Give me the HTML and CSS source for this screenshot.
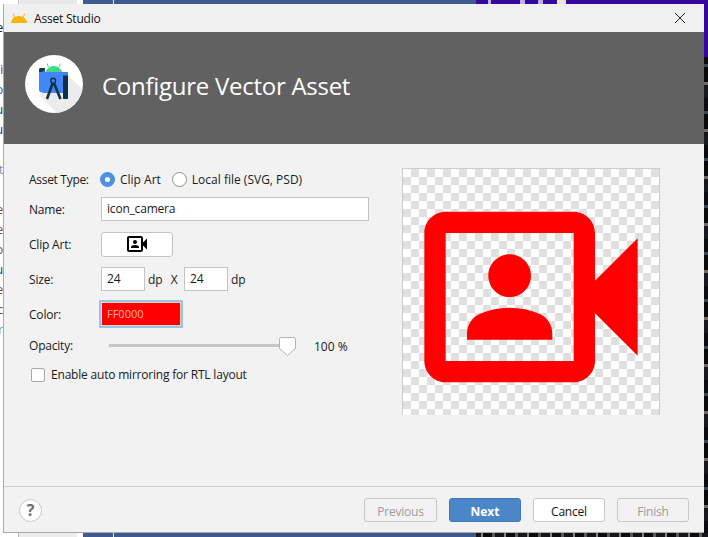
FILE: index.html
```html
<!DOCTYPE html>
<html lang="en">
<head>
<meta charset="utf-8">
<title>Asset Studio</title>
<link rel="stylesheet" href="styles.css">
</head>
<body>
<div class="desktop">
  <div class="bg bg-top"></div>
  <div class="bg bg-left">
    <span class="frag frag-dark">e</span>
    <span class="frag"></span>
    <span class="frag frag-red">i</span>
    <span class="frag frag-blue">o</span>
    <span class="frag frag-navy">u</span>
    <span class="frag frag-navy">u</span>
    <span class="frag"></span>
    <span class="frag frag-slate">t</span>
    <span class="frag"></span>
    <span class="frag frag-brown">e</span>
    <span class="frag frag-brown">e</span>
    <span class="frag frag-brown">o</span>
    <span class="frag frag-navy">u</span>
    <span class="frag frag-brown">e</span>
    <span class="frag frag-brown">c</span>
    <span class="frag frag-slate">r</span>
  </div>
  <div class="bg bg-right"></div>
  <div class="bg bg-bottom"></div>

  <div class="window">
    <div class="titlebar">
      <svg class="droid" width="18" height="12" viewBox="0 0 18 12">
        <path fill="#f5b400" d="M1 11C1.400 7.200 4.600 4 9 4s7.600 3.200 8 7z"/>
        <path stroke="#f5b400" stroke-width="1" d="M4.800 5.500 3.300 1.500M13.200 5.500 14.700 1.500"/>
      </svg>
      <span class="title-text">Asset Studio</span>
      <svg class="close" width="12" height="12" viewBox="0 0 12 12">
        <path stroke="#222" stroke-width="1" fill="none" d="M1 1l10 10M11 1 1 11"/>
      </svg>
    </div>

    <div class="banner">
      <div class="logo">
        <svg width="58" height="58" viewBox="0 0 58 58">
          <defs><clipPath id="logoClip"><circle cx="29" cy="29" r="29"/></clipPath></defs>
          <circle cx="29" cy="29" r="29" fill="#fff"/>
          <path clip-path="url(#logoClip)" fill="#ececec" d="M43 20 58 35V58H32L14 40z"/>
          <path fill="#3ddc84" d="M20 20c.4-5.500 4-9 8.800-9s8.500 3.500 8.900 9z"/>
          <path stroke="#3ddc84" stroke-width="1" d="M23.500 12 22 8.500M34 12l1.500-3.500"/>
          <path fill="#1d3a4c" d="M14 14.500c0-1 .8-1.500 1.800-1.500H20v7h-6z"/>
          <path fill="#4285f4" d="M14 17h2.500c1.500 0 2.500-1 2.500-2.500h.5V17H43v21H20c-3 0-6-1-6-3z"/>
          <path fill="#0f3246" d="M38 20.500h5V43c0 .6-.4 1-1 1h-4z"/>
          <path fill="none" stroke="#0f3246" stroke-width="2.600" d="M28 27 22 44M28.500 27 35.500 44"/>
          <circle cx="28.200" cy="25.700" r="2.400" fill="#4285f4" stroke="#0f3246" stroke-width="1.400"/>
        </svg>
      </div>
      <h1 class="banner-title">Configure Vector Asset</h1>
    </div>

    <div class="content">
      <div class="form">
        <div class="row row-type">
          <span class="label label-type">Asset Type:</span>
          <span class="radio radio-on"></span>
          <span class="radio-text">Clip Art</span>
          <span class="radio radio-off"></span>
          <span class="radio-text">Local file (SVG, PSD)</span>
        </div>
        <div class="row row-name">
          <span class="label">Name:</span>
          <div class="input input-name">icon_camera</div>
        </div>
        <div class="row row-clip">
          <span class="label">Clip Art:</span>
          <div class="clip-button">
            <svg width="24" height="24" viewBox="0 0 24 24"><path fill="#000" d="M18 10.480V6c0-1.100-.9-2-2-2H4c-1.100 0-2 .9-2 2v12c0 1.100.9 2 2 2h12c1.100 0 2-.9 2-2v-4.480l4 3.980v-11l-4 3.980zM16 18H4V6h12v12zm-6-6c1.100 0 2-.9 2-2s-.9-2-2-2-2 .9-2 2 .9 2 2 2zm4 3.430c0-.81-.48-1.530-1.220-1.850-.85-.37-1.790-.58-2.780-.58-.99 0-1.930.21-2.780.58C6.480 13.900 6 14.620 6 15.430V16h8v-.57z"/></svg>
          </div>
        </div>
        <div class="row row-size">
          <span class="label">Size:</span>
          <div class="input input-size">24</div>
          <span class="unit">dp</span>
          <span class="times">X</span>
          <div class="input input-size">24</div>
          <span class="unit">dp</span>
        </div>
        <div class="row row-color">
          <span class="label">Color:</span>
          <div class="color-field">FF0000</div>
        </div>
        <div class="row row-opacity">
          <span class="label">Opacity:</span>
          <div class="slider">
            <svg class="thumb" width="17" height="19" viewBox="0 0 17 19">
              <path fill="#fff" stroke="#b5b5b5" d="M2 .5h13a1.500 1.500 0 0 1 1.500 1.500v9.500l-8 7-8-7V2A1.500 1.500 0 0 1 2 .5z"/>
            </svg>
          </div>
          <span class="percent">100 %</span>
        </div>
        <div class="row row-check">
          <span class="checkbox"></span>
          <span class="check-text">Enable auto mirroring for RTL layout</span>
        </div>
      </div>
      <div class="preview">
        <svg class="preview-icon" width="256" height="256" viewBox="0 0 24 24"><path fill="#f00" d="M18 10.480V6c0-1.100-.9-2-2-2H4c-1.100 0-2 .9-2 2v12c0 1.100.9 2 2 2h12c1.100 0 2-.9 2-2v-4.480l4 3.980v-11l-4 3.980zM16 18H4V6h12v12zm-6-6c1.100 0 2-.9 2-2s-.9-2-2-2-2 .9-2 2 .9 2 2 2zm4 3.430c0-.81-.48-1.530-1.220-1.850-.85-.37-1.790-.58-2.780-.58-.99 0-1.930.21-2.780.58C6.480 13.900 6 14.620 6 15.430V16h8v-.57z"/></svg>
      </div>
    </div>

    <div class="footer">
      <div class="help">?</div>
      <div class="buttons">
        <div class="btn btn-disabled">Previous</div>
        <div class="btn btn-primary">Next</div>
        <div class="btn btn-default">Cancel</div>
        <div class="btn btn-disabled">Finish</div>
      </div>
    </div>
  </div>
</div>
</body>
</html>
```

FILE: styles.css
```css
* { box-sizing: border-box; }
html, body { margin: 0; padding: 0; }
body {
  width: 708px;
  height: 537px;
  overflow: hidden;
  font-family: "Open Sans", "Noto Sans", "Liberation Sans", sans-serif;
  font-size: 12px;
  letter-spacing: -0.2px;
  color: #1a1a1a;
}
.desktop { position: relative; width: 708px; height: 537px; background: #fff; overflow: hidden; }
.bg { position: absolute; }
.bg-top {
  left: 0; top: 0; width: 708px; height: 4px;
  background: linear-gradient(90deg,
    #fff 0 18px, #c9c9c9 18px 19px, #e9e9e9 19px 77px, #fff 77px 83px,
    #3f5a8e 83px 113px, #e8e8f0 113px 114px, #3f5a8e 114px 476px,
    #35079a 476px 488px, #b9b0e0 488px 491px, #35079a 491px 520px, #b9b0e0 520px 525px,
    #35079a 525px 538px, #b9b0e0 538px 543px, #35079a 543px 557px, #e6e6e6 557px 566px, #35079a 566px);
}
.bg-left { left: 0; top: 4px; width: 3px; height: 529px; background: #fff; padding-top: 16px; overflow: hidden; }
.frag {
  display: flex; justify-content: flex-end; width: 3px; height: 20px;
  font-size: 12px; line-height: 20px; white-space: nowrap; color: #222;
}
.frag-dark { margin-top: -2px; margin-bottom: 2px; }
.frag-red { color: #a02048; }
.frag-blue { color: #2a5a98; }
.frag-navy { color: #1a2a60; }
.frag-slate { color: #7a8ca8; }
.frag-brown { color: #8a4a20; }
.bg-right {
  left: 704px; top: 4px; width: 4px; height: 529px;
  background:
    linear-gradient(#35079a 0 53px, transparent 53px),
    repeating-linear-gradient(#0c0c10 0 13px, #3e4450 13px 16px, #0a0a0a 16px 31px, #6f6a66 31px 34px, #17181c 34px 47px);
}
.bg-bottom {
  left: 0; top: 533px; width: 708px; height: 4px;
  background:
    linear-gradient(90deg, #fff 0 18px, #b8b8b8 18px 19px, #ececec 19px 77px, #fff 77px 83px,
      #3f5a8e 83px 113px, #e8e8f0 113px 114px, #3f5a8e 114px 476px, transparent 476px),
    repeating-linear-gradient(90deg, #0c0c10 0 9px, #5c5a58 9px 12px, #15161a 12px 21px, #8a8682 21px 23px);
}

.window {
  position: absolute;
  left: 3px;
  top: 4px;
  width: 701px;
  height: 529px;
  background: #f2f2f2;
  border-left: 1px solid #a9a9a9;
  border-bottom: 1px solid #a9a9a9;
  display: flex;
  flex-direction: column;
}
.titlebar { height: 28px; display: flex; align-items: center; padding: 0 18px 0 6px; background: #f0f0f0; }
.droid { margin-right: 6px; }
.title-text { flex: 1; color: #111; }
.banner { height: 112px; background: #616161; display: flex; align-items: center; padding: 0 0 8px 21px; }
.logo { width: 58px; height: 58px; }
.logo svg { display: block; }
.banner-title { margin: 2px 0 0 19px; font-size: 24px; font-weight: 400; letter-spacing: -0.27px; color: #fff; }

.content { flex: 1; display: flex; border-bottom: 1px solid #cfcfcf; }
.form { width: 398px; padding: 24px 0 0 25px; }
.row { display: flex; align-items: center; }
.label { width: 72px; }
.label-type { width: 71px; letter-spacing: -0.3px; }
.row-type { height: 22px; }
.row-name { height: 24px; margin-top: 7px; }
.row-clip { height: 25px; margin-top: 11px; }
.row-size { height: 24px; margin-top: 10px; }
.row-color { height: 24px; margin-top: 11px; }
.row-opacity { height: 21px; margin-top: 9px; }
.row-check { height: 15px; margin-top: 11px; padding-left: 2px; }

.radio { width: 15px; height: 15px; border-radius: 50%; flex: none; }
.radio-on { background: #fff; border: 5px solid #4c92e0; }
.radio-off { background: #fff; border: 1px solid #8c8c8c; margin-left: 11px; }
.radio-text { margin-left: 5px; letter-spacing: 0; }

.input { height: 24px; background: #fff; border: 1px solid #c4c4c4; padding-left: 5px; line-height: 22px; }
.input-name { width: 268px; }
.input-size { width: 44px; }
.unit { margin-left: 3px; width: 20px; }
.times { width: 16px; padding-right: 4px; text-align: center; }
.clip-button {
  width: 72px; height: 25px; background: #fff; border: 1px solid #c4c4c4; border-radius: 3px;
  display: flex; align-items: center; justify-content: center;
}
.clip-button svg { display: block; margin-top: -1px; }
.color-field {
  width: 80px; height: 24px; background: #f00; color: #ffb3a8;
  border: 1px solid #f4d4b0; outline: 2px solid #97c3ee; outline-offset: 0;
  padding-left: 5px; font-size: 11px; letter-spacing: 0; line-height: 22px;
}
.slider { position: relative; width: 179px; height: 3px; margin-left: 8px; background: #c6c6c6; }
.thumb { position: absolute; left: 170px; top: -7px; display: block; }
.percent { margin-left: 26px; padding-top: 1px; letter-spacing: 0; }
.checkbox { width: 14px; height: 14px; background: #fff; border: 1px solid #a8a8a8; border-radius: 2px; flex: none; }
.check-text { margin-left: 6px; }

.preview {
  width: 258px;
  height: 247px;
  margin-top: 24px;
  border: 1px solid #cdcdcd;
  border-bottom: 0;
  overflow: hidden;
  background: conic-gradient(#e0e0e0 25%, #fff 0 50%, #e0e0e0 0 75%, #fff 0) 0 0 / 16px 16px;
}
.preview-icon { display: block; }

.footer { height: 45px; display: flex; align-items: center; justify-content: space-between; padding: 1px 15px 0 15px; }
.help {
  width: 23px; height: 23px; border-radius: 50%; background: #fff; border: 1px solid #c8c8c8;
  color: #6e6e6e; font-weight: 700; font-size: 16px; text-align: center; line-height: 21px;
}
.buttons { display: flex; gap: 12px; }
.btn { width: 72px; height: 24px; border-radius: 3px; text-align: center; line-height: 25px; border: 1px solid #c8c8c8; }
.btn-disabled { width: 73px; color: #9b9b9b; background: #f2f2f2; }
.btn-disabled:last-child { width: 72px; }
.btn-primary { background: #4b87c8; border-color: #3f78b6; color: #fff; font-weight: 700; letter-spacing: 0; }
.btn-default { background: #fff; color: #111; }
```
